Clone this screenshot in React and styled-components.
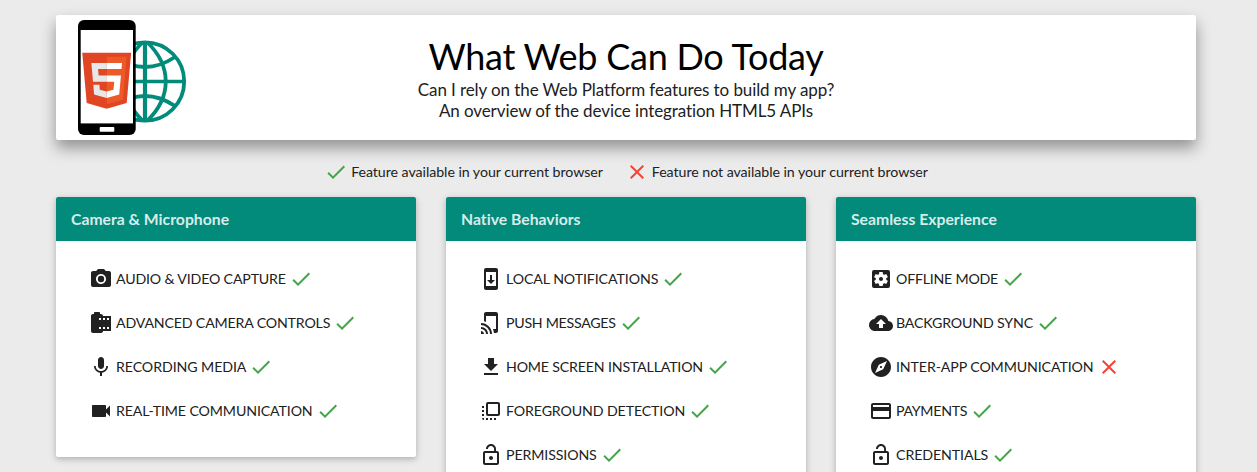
import React from 'react';
import styled, { createGlobalStyle } from 'styled-components';
import {
  MdPhotoCamera, MdCameraRoll, MdMic, MdVideocam, MdSystemUpdate, MdTapAndPlay,
  MdFileDownload, MdFlipToFront, MdLockOpen, MdSettingsApplications, MdBackup,
  MdExplore, MdPayment, MdCheck, MdClose,
} from 'react-icons/md';

const GlobalStyle = createGlobalStyle`
  * { box-sizing: border-box; }
  html, body { margin: 0; height: 100%; overflow: hidden; }
  body {
    background: #ebebeb;
    color: #212121;
    font-family: Lato, "Liberation Sans", sans-serif;
    font-size: 14.2px;
    font-variant-ligatures: none;
  }
`;

const Page = styled.div`
  width: 1140px;
  height: 100vh;
  margin-left: 56px;
  padding-top: 15px;
`;

const Banner = styled.header`
  position: relative;
  height: 125px;
  padding-top: 20px;
  background: #fff;
  border-radius: 2px;
  text-align: center;
  box-shadow: 0 8px 15px rgba(0, 0, 0, 0.38);
`;

const Logo = styled.svg`
  position: absolute;
  left: 20px;
  top: 4px;
`;

const Title = styled.h1`
  margin: 0;
  font-size: 36px;
  font-weight: 400;
  line-height: 43px;
  letter-spacing: -0.25px;
  color: #000;
`;

const Tagline = styled.p`
  margin: 1px 0 0;
  font-size: 17px;
  line-height: 21px;
  letter-spacing: -0.09px;
`;

const Legend = styled.div`
  display: flex;
  justify-content: center;
  gap: 22px;
  height: 57px;
  padding-top: 20px;
  letter-spacing: -0.05px;
`;

const LegendItem = styled.span`
  display: flex;
  align-items: center;
  gap: 3px;
  height: 24px;
`;

const LegendText = styled.span`
  line-height: 18px;
  padding-bottom: 1px;
`;

const Mark = styled.span`
  display: inline-flex;
  color: ${(p) => (p.$ok ? '#43a648' : '#f44336')};
`;

const Columns = styled.main`
  display: grid;
  grid-template-columns: repeat(3, 360px);
  gap: 30px;
  align-items: start;
`;

const Card = styled.section`
  background: #fff;
  border-radius: 2px;
  overflow: hidden;
  box-shadow: 0 2px 5px rgba(0, 0, 0, 0.16), 0 2px 10px rgba(0, 0, 0, 0.12);
`;

const CardTitle = styled.h2`
  margin: 0;
  height: 44px;
  padding-left: 15px;
  background: #028b7b;
  color: rgba(255, 255, 255, 0.85);
  font-size: 15.75px;
  font-weight: 700;
  line-height: 43px;
`;

const List = styled.ul`
  margin: 0;
  padding: 16px 0 24px 33px;
  list-style: none;
`;

const Feature = styled.li`
  display: flex;
  align-items: center;
  height: 44px;
  color: #212121;
`;

const Label = styled.span`
  margin: 0 3px;
  line-height: 18px;
  padding-bottom: 1px;
  text-transform: uppercase;
  white-space: nowrap;
  letter-spacing: ${(p) => p.$tracking}px;
`;

const groups = [
  { title: 'Camera & Microphone', items: [
    [MdPhotoCamera, 'Audio & Video Capture', true, -0.18],
    [MdCameraRoll, 'Advanced Camera Controls', true, -0.18],
    [MdMic, 'Recording Media', true, -0.09],
    [MdVideocam, 'Real-Time Communication', true, -0.13],
  ] },
  { title: 'Native Behaviors', items: [
    [MdSystemUpdate, 'Local Notifications', true, -0.1],
    [MdTapAndPlay, 'Push Messages', true, -0.28],
    [MdFileDownload, 'Home Screen Installation', true, -0.18],
    [MdFlipToFront, 'Foreground Detection', true, -0.13],
    [MdLockOpen, 'Permissions', true, -0.12],
  ] },
  { title: 'Seamless Experience', items: [
    [MdSettingsApplications, 'Offline Mode', true, -0.23],
    [MdBackup, 'Background Sync', true, -0.17],
    [MdExplore, 'Inter-App Communication', false, -0.12],
    [MdPayment, 'Payments', true, -0.3],
    [MdLockOpen, 'Credentials', true, -0.1],
  ] },
];

function Status({ ok }) {
  return <Mark $ok={ok}>{ok ? <MdCheck size={24} /> : <MdClose size={24} />}</Mark>;
}

function SiteLogo() {
  return (
    <Logo width="112" height="118" viewBox="76 19 112 118">
      <g fill="none" stroke="#028b7b" strokeWidth="3.8">
        <circle cx="145" cy="81.5" r="39.2" />
        <path d="M145 42V121" strokeWidth="4.2" />
        <path d="M106 81.5H184" strokeWidth="3.6" />
        <path d="M147 42C172 66 172 97 147 121M143 42C118 66 118 97 143 121" />
        <path d="M115 57Q145 77 175 57M115 106Q145 86 175 106" />
      </g>
      <rect x="78" y="20" width="57.7" height="115" rx="6" fill="#000" />
      <rect x="80.7" y="30" width="52.3" height="93.4" fill="#fff" />
      <rect x="99.7" y="127" width="14.6" height="4.7" rx="0.8" fill="#fff" />
      <g transform="translate(79 52.7) scale(.1084 .1094)">
        <path fill="#e04524" d="M71 460 30 0h451l-41 460-185 52z" />
        <path fill="#ed5a27" d="M256 472l149-41 35-394H256z" />
        <path fill="#e8e8e8" d="M256 208h-75l-5-58h80V94H114l15 171h127zm-1 147-63-17-4-45h-56l7 89 116 32z" />
        <path fill="#fff" d="M255 208v57h70l-7 73-63 17v59l116-32 16-174zm0-114v56h137l5-56z" />
      </g>
    </Logo>
  );
}

export default function App() {
  return (
    <>
      <GlobalStyle />
      <Page>
        <Banner>
          <SiteLogo />
          <Title>What Web Can Do Today</Title>
          <Tagline>
            Can I rely on the Web Platform features to build my app?
            <br />
            An overview of the device integration HTML5 APIs
          </Tagline>
        </Banner>
        <Legend>
          <LegendItem>
            <Status ok />
            <LegendText>Feature available in your current browser</LegendText>
          </LegendItem>
          <LegendItem>
            <Status ok={false} />
            <LegendText>Feature not available in your current browser</LegendText>
          </LegendItem>
        </Legend>
        <Columns>
          {groups.map((group) => (
            <Card key={group.title}>
              <CardTitle>{group.title}</CardTitle>
              <List>
                {group.items.map(([Icon, name, ok, tracking]) => (
                  <Feature key={name}>
                    <Icon size={24} />
                    <Label $tracking={tracking}>{name}</Label>
                    <Status ok={ok} />
                  </Feature>
                ))}
              </List>
            </Card>
          ))}
        </Columns>
      </Page>
    </>
  );
}
